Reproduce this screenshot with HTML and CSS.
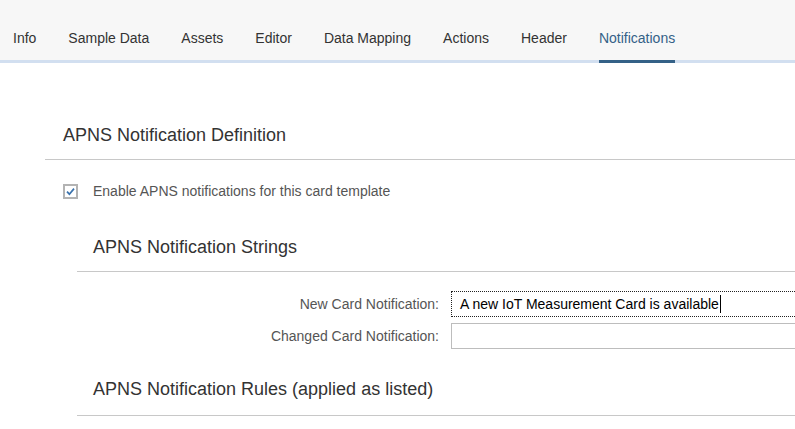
FILE: index.html
```html
<!DOCTYPE html>
<html>
<head>
<meta charset="utf-8">
<link rel="stylesheet" href="styles.css">
</head>
<body>
<nav class="tabs">
  <span class="tab">Info</span>
  <span class="tab">Sample Data</span>
  <span class="tab">Assets</span>
  <span class="tab">Editor</span>
  <span class="tab">Data Mapping</span>
  <span class="tab">Actions</span>
  <span class="tab">Header</span>
  <span class="tab active">Notifications</span>
</nav>
<main class="content">
  <section class="section">
    <h2 class="heading">APNS Notification Definition</h2>
    <label class="check-row">
      <svg class="checkbox" width="15" height="15" viewBox="0 0 15 15">
        <rect x="1" y="1" width="13" height="13" fill="#fff" stroke="#b3b3b3" stroke-width="2"/>
        <path d="M4 7.6 L6.4 10.2 L11 4.6" fill="none" stroke="#3b73ad" stroke-width="1.7"/>
      </svg>
      <span class="check-label">Enable APNS notifications for this card template</span>
    </label>
    <section class="subsection">
      <h3 class="heading sub">APNS Notification Strings</h3>
      <div class="form">
        <div class="form-row">
          <span class="form-label">New Card Notification:</span>
          <div class="field focused">A new IoT Measurement Card is available<span class="caret"></span></div>
        </div>
        <div class="form-row">
          <span class="form-label">Changed Card Notification:</span>
          <div class="field"></div>
        </div>
      </div>
      <h3 class="heading sub rules">APNS Notification Rules (applied as listed)</h3>
    </section>
  </section>
</main>
</body>
</html>
```
FILE: styles.css
```css
html, body {
  margin: 0;
  padding: 0;
  background: #fff;
  overflow: hidden;
  font-family: "Liberation Sans", Arial, sans-serif;
  color: #333;
}

.tabs {
  display: flex;
  gap: 32px;
  padding-left: 13px;
  background: #f7f7f7;
  border-bottom: 3px solid #d2dff0;
}

.tab {
  padding-top: 30px;
  padding-bottom: 14px;
  line-height: 16px;
  font-size: 14px;
  color: #333;
  border-bottom: 3px solid transparent;
  margin-bottom: -3px;
  white-space: nowrap;
}

.tab.active {
  color: #346187;
  border-bottom-color: #346187;
}

.content {
  padding-top: 49px;
}

.section {
  margin-left: 45px;
}

.heading {
  margin: 0;
  font-weight: normal;
  font-size: 18px;
  line-height: 47px;
  padding-left: 18px;
  color: #333;
  border-bottom: 1px solid #c8c8c8;
}

.check-row {
  display: flex;
  align-items: center;
  gap: 15px;
  height: 30px;
  margin-top: 16px;
  padding-left: 18px;
}

.checkbox {
  display: block;
  flex: none;
}

.check-label {
  font-size: 14px;
  color: #555;
}

.subsection {
  margin-left: 32px;
  margin-top: 17px;
}

.heading.sub {
  padding-left: 16px;
  line-height: 48px;
}

.form {
  display: flex;
  flex-direction: column;
  gap: 6px;
  margin-top: 19px;
}

.form-row {
  display: flex;
  align-items: center;
  gap: 12px;
  overflow: hidden;
}

.form-label {
  width: 362px;
  text-align: right;
  font-size: 14px;
  color: #555;
  flex: none;
}

.field {
  box-sizing: border-box;
  height: 26px;
  flex: 1;
  min-width: 0;
  margin-right: -2px;
  border: 1px solid #bdbdbd;
  font-size: 14px;
  line-height: 24px;
  padding-left: 8px;
  color: #000;
  display: flex;
  align-items: center;
  white-space: nowrap;
}

.field.focused {
  border: 1px dotted #222;
}

.caret {
  display: inline-block;
  width: 1px;
  height: 18px;
  background: #000;
  margin-left: 1px;
}

.heading.rules {
  margin-top: 14px;
  line-height: 52px;
}
```
